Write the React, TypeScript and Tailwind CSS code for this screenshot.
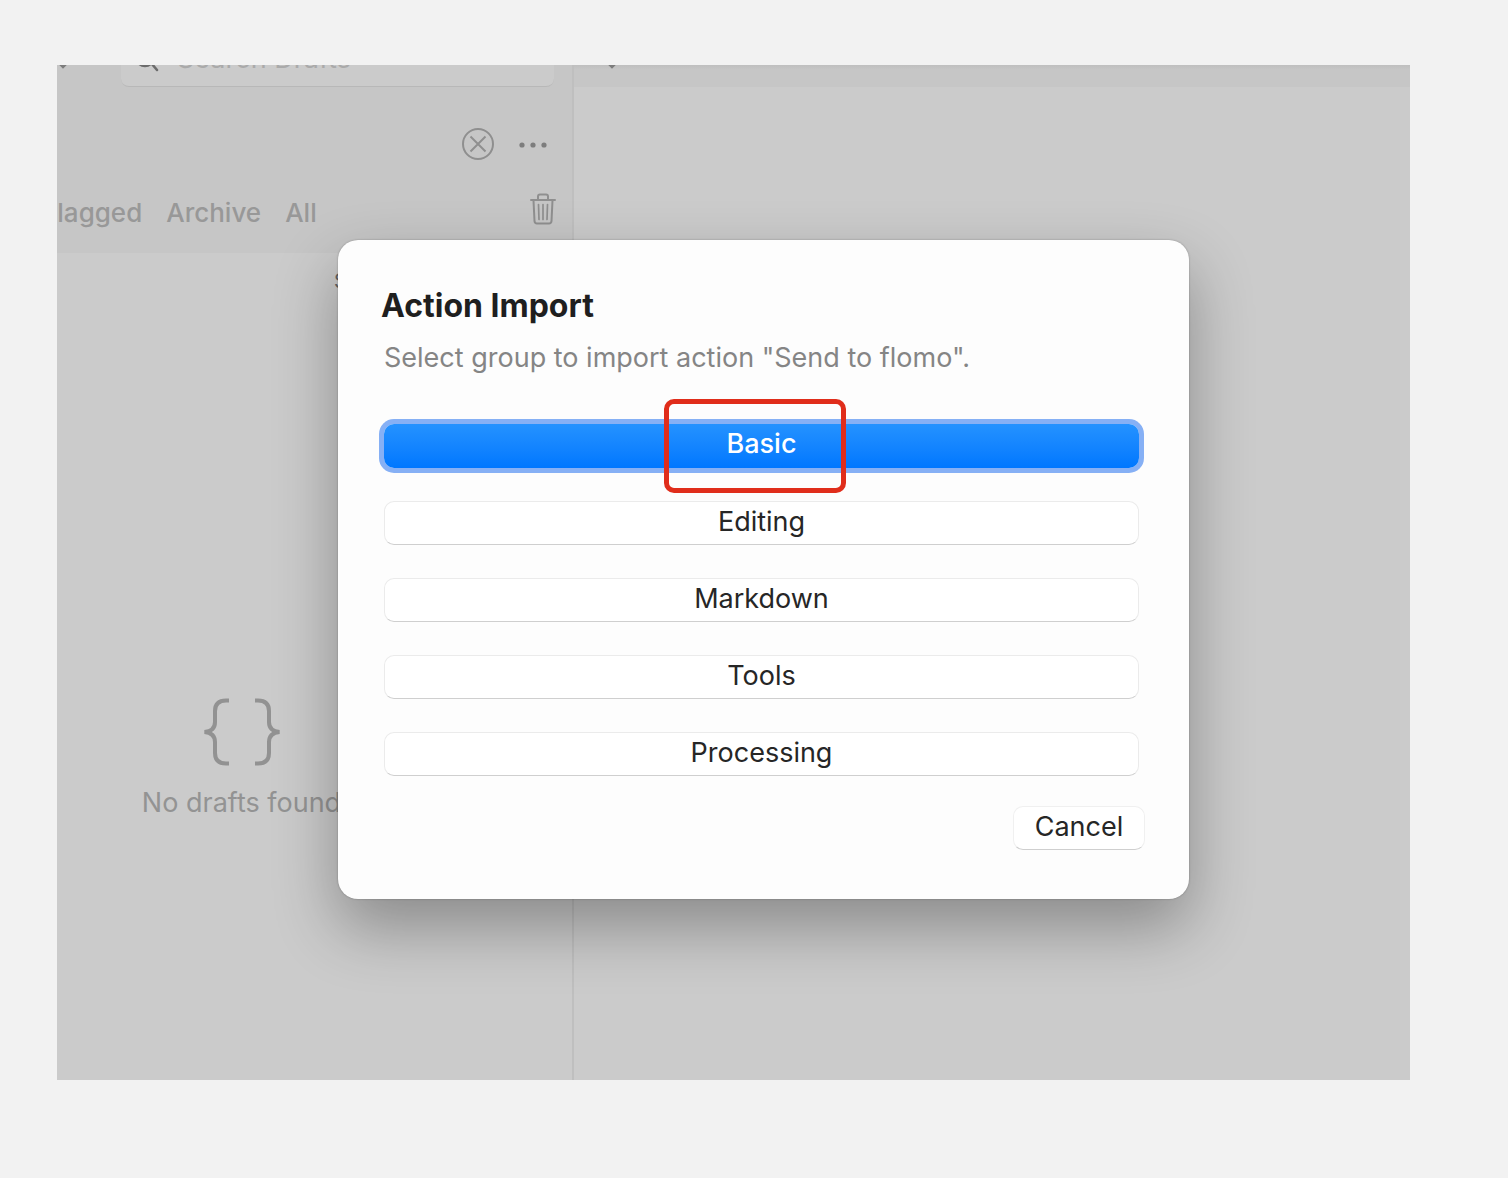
import { clsx } from "clsx";

const groups = ["Basic", "Editing", "Markdown", "Tools", "Processing"];
const filters = ["Flagged", "Archive", "All"];

function SearchIcon() {
  return (
    <svg width="28" height="28" viewBox="0 0 28 28" fill="none" stroke="#6b6b6b" strokeWidth="2.5" strokeLinecap="round">
      <circle cx="8" cy="12" r="9" />
      <path d="M14.500 18.500L20 25" />
    </svg>
  );
}

function ClearIcon() {
  return (
    <svg width="34" height="34" viewBox="0 0 34 34" fill="none" stroke="#8f8f8f" strokeWidth="2">
      <circle cx="18" cy="17" r="15" />
      <path d="M10.500 9.500l15 15M25.500 9.500l-15 15" />
    </svg>
  );
}

function MoreIcon() {
  return (
    <svg width="30" height="8" viewBox="0 0 30 8" fill="#7d7d7d">
      <circle cx="4" cy="5" r="2.6" />
      <circle cx="15" cy="5" r="2.6" />
      <circle cx="26" cy="5" r="2.6" />
    </svg>
  );
}

function TrashIcon() {
  return (
    <svg width="26" height="32" viewBox="0 0 26 32" fill="none" stroke="#8f8f8f" strokeWidth="2" strokeLinecap="round">
      <path d="M1 7h24M8 6.500V3.500Q8 1.500 10 1.500H16Q18 1.500 18 3.500V6.500" />
      <path d="M3.500 7.500L4.500 28Q4.700 30.500 7 30.500H19Q21.300 30.500 21.500 28L22.500 7.500" />
      <path d="M8.500 11.500L9 26.500M13 11.500V26.500M17.500 11.500L17 26.500" strokeWidth="1.700" />
    </svg>
  );
}

function ChevronIcon() {
  return (
    <svg width="16" height="10" viewBox="0 0 16 10" fill="none" stroke="#7d7d7d" strokeWidth="2.5">
      <path d="M1 1l7 7 7-7" />
    </svg>
  );
}

function BracesIcon() {
  return (
    <svg width="78" height="70" viewBox="0 0 78 70" fill="none" stroke="#929292" strokeWidth="4">
      <path d="M26 3.500H23Q12 3.500 12 14V25Q12 34 1.500 35Q12 36 12 45V56Q12 66.500 23 66.500H26" />
      <path d="M52 3.500H55Q66 3.500 66 14V25Q66 34 76.500 35Q66 36 66 45V56Q66 66.500 55 66.500H52" />
    </svg>
  );
}

function Sidebar() {
  return (
    <aside className="-ml-[146px] flex w-[663px] shrink-0 flex-col border-r-2 border-[#bfbfbf]">
      <div className="bg-[#c6c6c6]">
        <div className="-mt-6 flex items-start pr-[18px] pl-36">
          <button aria-label="Toggle sidebar" className="w-[66px] shrink-0 pt-[18px]"><ChevronIcon /></button>
          <label className="flex h-[46px] min-w-0 flex-1 items-start gap-3 rounded-lg border-b border-[#b8b8b8] bg-[#cbcbcb] pt-1 pl-4">
            <SearchIcon />
            <input
              type="search"
              aria-label="Search drafts"
              placeholder="Search Drafts"
              className="h-7 min-w-0 flex-1 bg-transparent text-[27px] outline-none placeholder:text-[#aaaaaa]"
            />
          </label>
        </div>
        <div className="mt-10 flex items-center justify-end gap-6 pr-6">
          <button aria-label="Clear"><ClearIcon /></button>
          <button aria-label="More"><MoreIcon /></button>
        </div>
        <div className="mt-7 flex h-[64px] items-start pr-4 pl-[131px]">
          <nav className="flex flex-1 gap-6 pt-1 text-[26px] leading-10 font-medium text-[#989898]">
            {filters.map((f) => (
              <button key={f}>{f}</button>
            ))}
          </nav>
          <button aria-label="Trash" className="pt-1"><TrashIcon /></button>
        </div>
      </div>
      <div className="flex h-14 items-center pl-[423px]">
        <button className="text-xl text-[#666666]">Sort</button>
      </div>
      <div className="flex flex-1 flex-col items-center justify-center gap-4 pt-[130px]">
        <BracesIcon />
        <p className="text-[27px] leading-10 text-[#939393]">No drafts found</p>
      </div>
    </aside>
  );
}

function ActionImportDialog() {
  return (
    <div
      role="dialog"
      aria-labelledby="import-title"
      className="w-full max-w-[851px] rounded-[20px] bg-[#fdfdfd] pt-11 pr-11 pb-[49px] pl-[43px] shadow-[0_0_2px_rgba(0,0,0,0.3),0_28px_64px_rgba(0,0,0,0.32)]"
    >
      <h1 id="import-title" className="text-[32px] leading-11 font-bold text-[#1f1f1f]">Action Import</h1>
      <div className="pr-1.5 pl-[3px]">
        <p className="mt-2 text-[27px] leading-11 text-[#858585]">Select group to import action "Send to flomo".</p>
        <div className="mt-11 flex flex-col gap-[33px]">
          {groups.map((group, i) => (
            <div key={group} className="relative flex">
              <button
                className={clsx(
                  "h-11 flex-1 rounded-[10px] pb-1 text-[27px] leading-10",
                  i === 0
                    ? "bg-linear-to-b from-[#2492ff] to-[#0077ff] font-medium text-white ring-5 ring-[#86b0f5]"
                    : "border border-[#ebebeb] border-b-[#cfcfcf] bg-white text-[#262626]",
                )}
              >
                {group}
              </button>
              {i === 0 && (
                <span className="pointer-events-none absolute -top-[25px] left-[280px] h-[94px] w-[182px] rounded-[10px] border-5 border-[#e02d1b]" />
              )}
            </div>
          ))}
        </div>
      </div>
      <div className="mt-[30px] flex justify-end">
        <button className="h-11 w-[132px] rounded-[10px] border border-[#f0f0f0] border-b-[#cfcfcf] bg-white pb-1 text-[27px] leading-10 text-[#262626]">
          Cancel
        </button>
      </div>
    </div>
  );
}

export default function App() {
  return (
    <div className="flex min-h-screen bg-[#f2f2f2] pt-[65px] pr-[98px] pb-[98px] pl-[57px] font-['Inter',sans-serif]">
      <div className="relative flex flex-1 overflow-hidden bg-[#cbcbcb]">
        <Sidebar />
        <main className="flex-1">
          <div className="flex h-[22px] items-start bg-[#c6c6c6] bg-linear-to-b from-[#bfbfbf] to-[#c6c6c6] to-20% pl-[30px]">
            <button aria-label="Switch view" className="-mt-1.5"><ChevronIcon /></button>
          </div>
        </main>
        <div className="absolute inset-0 flex items-start justify-center pt-[175px] pl-[60px]">
          <ActionImportDialog />
        </div>
      </div>
    </div>
  );
}
